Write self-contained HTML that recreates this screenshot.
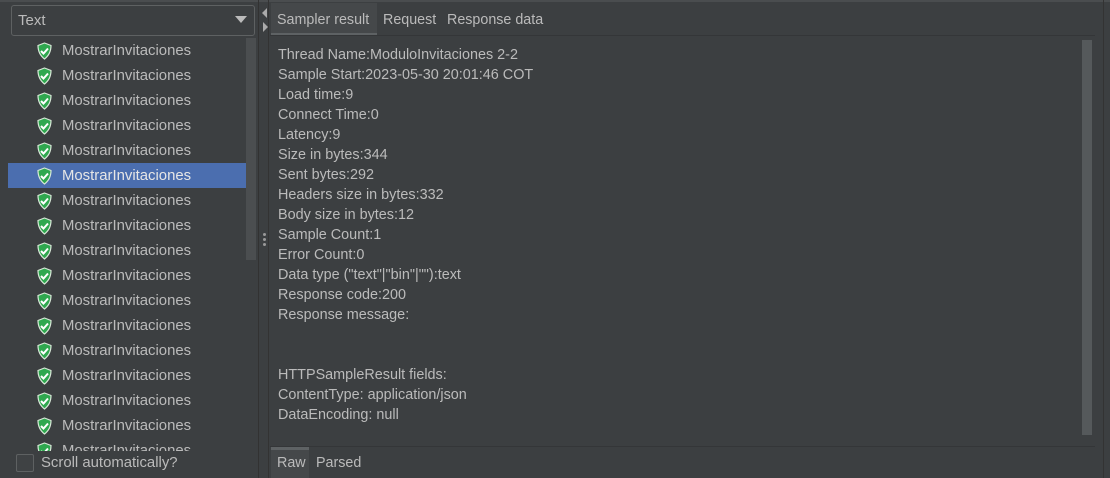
<!DOCTYPE html>
<html><head><style>
body{margin:0;width:1110px;height:478px;background:#3c3f41;font-family:"Liberation Sans",sans-serif;color:#bbbbbb;overflow:hidden;position:relative;font-size:14px}
.a{position:absolute}
.row{position:absolute;left:8px;width:238px;height:25px;line-height:25px}
.row svg{position:absolute;left:28px;top:4px}
.row span{position:absolute;left:54px;top:1px;font-size:14.9px}
.sel{background:#4b6eaf;color:#e6e6e6}
.txt div{height:20px;line-height:20px;white-space:pre}
</style></head><body>
<div class="a" style="left:0;top:0;width:1110px;height:2px;background:#4a4d4f"></div>
<div class="a" style="left:11px;top:5px;width:242px;height:29px;border:1px solid #5e6162;border-radius:3px;background:#3c3f41"></div>
<div class="a" style="left:18px;top:12px;font-size:15px">Text</div>
<div class="a" style="left:235px;top:16px;width:0;height:0;border-left:6px solid transparent;border-right:6px solid transparent;border-top:7px solid #bbb"></div>
<div class="a" style="left:246px;top:38px;width:10px;height:222px;background:#4b4e50"></div>
<div class="a" id="list" style="left:0;top:0;width:258px;height:451px;overflow:hidden"></div>
<div class="a" style="left:16px;top:454px;width:16px;height:16px;border:1px solid #5e6162;border-radius:2px;background:#3f4244"></div>
<div class="a" style="left:41px;top:455px;font-size:14.9px">Scroll automatically?</div>
<div class="a" style="left:258px;top:0;width:1px;height:478px;background:#323232"></div>
<div class="a" style="left:262px;top:8px;width:0;height:0;border-top:5px solid transparent;border-bottom:5px solid transparent;border-right:5px solid #aaa"></div>
<div class="a" style="left:263px;top:22px;width:0;height:0;border-top:5px solid transparent;border-bottom:5px solid transparent;border-left:5px solid #aaa"></div>
<div class="a" style="left:263px;top:233px;width:3px;height:3px;background:#999;border-radius:2px;box-shadow:0 5px 0 #999,0 10px 0 #999"></div>
<div class="a" style="left:268px;top:0;width:1px;height:478px;background:#333"></div>
<div class="a" style="left:271px;top:3px;width:106px;height:30px;background:#45484a;border-bottom:3px solid #5e6264"></div>
<div class="a" style="left:277px;top:12px;font-size:14.3px">Sampler result</div>
<div class="a" style="left:383px;top:12px;font-size:14.3px">Request</div>
<div class="a" style="left:447px;top:12px;font-size:14.3px">Response data</div>
<div class="a" style="left:270px;top:35px;width:825px;height:1px;background:#343638"></div>
<div class="a" style="left:1082px;top:40px;width:10px;height:395px;background:#55595b"></div>
<div class="a" style="left:1103px;top:0;width:1px;height:478px;background:#333"></div>
<div class="a txt" style="left:278px;top:45px;font-size:14.4px">
<div>Thread Name:ModuloInvitaciones 2-2</div><div>Sample Start:2023-05-30 20:01:46 COT</div><div>Load time:9</div><div>Connect Time:0</div><div>Latency:9</div><div>Size in bytes:344</div><div>Sent bytes:292</div><div>Headers size in bytes:332</div><div>Body size in bytes:12</div><div>Sample Count:1</div><div>Error Count:0</div><div>Data type ("text"|"bin"|""):text</div><div>Response code:200</div><div>Response message:</div><div> </div><div> </div><div>HTTPSampleResult fields:</div><div>ContentType: application/json</div><div>DataEncoding: null</div></div>
<div class="a" style="left:270px;top:446px;width:825px;height:1px;background:#343638"></div>
<div class="a" style="left:271px;top:447px;width:38px;height:31px;background:#45484a;border-top:3px solid #5e6264;box-sizing:border-box"></div>
<div class="a" style="left:277px;top:455px;font-size:14.3px">Raw</div>
<div class="a" style="left:316px;top:455px;font-size:14.3px">Parsed</div>
<script>
var h='';for(var i=0;i<17;i++){h+='<div class="row'+(i==5?' sel':'')+'" style="top:'+(38+i*25)+'px"><svg width="17" height="18" viewBox="0 0 17 18"><path d="M8.5 1 L15 3.5 Q15 12 8.5 17 Q2 12 2 3.5 Z" fill="#2fa84f" stroke="#d8e8d8" stroke-width="1.2"/><path d="M5 9 L7.5 11.5 L12 6.5" stroke="#fff" stroke-width="2" fill="none"/></svg><span>MostrarInvitaciones</span></div>';}
document.getElementById('list').innerHTML=h;
</script>
</body></html>
